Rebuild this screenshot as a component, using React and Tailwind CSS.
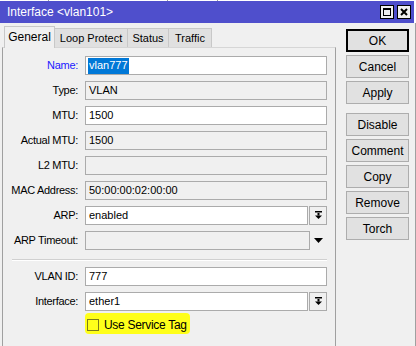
import React from "react";

function DropGlyph() {
  return (
    <svg width="9" height="9" viewBox="0 0 9 9">
      <rect x="1" y="0" width="7" height="1.5" fill="#000" />
      <rect x="3.5" y="2" width="2" height="2.5" fill="#000" />
      <polygon points="1,4.5 8,4.5 4.5,8" fill="#000" />
    </svg>
  );
}

function Field({ label, value, ro, blue, selected, drop, tri }) {
  return (
    <div className="flex items-center h-[19px]">
      <div className={`w-[75px] text-right tracking-[-0.3px] ${blue ? "text-[#1a1aff]" : "text-black"}`}>{label}:</div>
      <div className="ml-[7px] flex items-center w-[242px] h-full">
        <div
          className={`h-full border border-[#ababab] flex items-center pl-[2px] ${ro ? "bg-[#f0f0f0]" : "bg-white"} ${drop ? "w-[224px]" : tri ? "w-[225px]" : "w-full"}`}
        >
          {selected ? (
            <span className="bg-[#0078d7] text-white h-[16px] flex items-center px-px">{value}</span>
          ) : (
            <span className="pl-px">{value}</span>
          )}
        </div>
        {drop && (
          <div className="ml-[1px] w-[18px] h-full border border-[#ababab] bg-[#f0f0f0] flex items-center justify-center">
            <DropGlyph />
          </div>
        )}
        {tri && (
          <div className="flex-1 flex items-center justify-center">
            <svg width="9" height="5" viewBox="0 0 9 5">
              <polygon points="0,0 9,0 4.5,5" fill="#000" />
            </svg>
          </div>
        )}
      </div>
    </div>
  );
}

function Btn({ children, def }) {
  return (
    <div
      className={`h-[23px] flex items-center justify-center bg-[#e1e1e1] ${def ? "border-2 border-black" : "border border-[#adadad]"}`}
    >
      {children}
    </div>
  );
}

export default function App() {
  return (
    <div className="w-[416px] h-[346px] overflow-hidden bg-[#f0f0f0] flex flex-col font-['Liberation_Sans',Arial,sans-serif] text-[11px] text-black relative">
      <div className="h-px bg-white flex">
        <div className="w-[48px]" />
        <div className="w-px bg-[#9a9a9a]" />
        <div className="w-[118px]" />
        <div className="w-px bg-[#9a9a9a]" />
        <div className="w-[49px]" />
        <div className="w-px bg-[#9a9a9a]" />
      </div>
      <div className="flex">
        <div className="w-[414px] h-[22px] bg-[#4f4fcc] flex items-center pl-[7px] pr-[3px] text-white text-[12px]">
          <span className="flex-1">Interface &lt;vlan101&gt;</span>
          <div className="flex gap-[3px]">
            <div className="w-[14px] h-[14px] bg-[#f0f0f0] border border-black flex items-center justify-center">
              <div className="w-[8px] h-[8px] border border-black border-t-2" />
            </div>
            <div className="w-[14px] h-[14px] bg-[#f0f0f0] border border-black flex items-center justify-center">
              <svg width="8" height="8" viewBox="0 0 8 8">
                <path d="M1 1 L7 7 M7 1 L1 7" stroke="#000" strokeWidth="2" />
              </svg>
            </div>
          </div>
        </div>
        <div className="flex-1 bg-white" />
      </div>
      <div className="flex flex-1 border-r border-[#a0a0a0]">
        <div className="w-[336px] pl-[2px] flex flex-col">
          <div className="h-[24px] flex items-end pl-[2px] relative z-10">
            <div className="w-[51px] h-[22px] bg-[#f0f0f0] border border-b-0 border-[#c8c8c8] flex items-center justify-center pb-[2px] -mb-px relative z-10 text-[12px]">
              General
            </div>
            <div className="w-[73px] h-[19px] bg-[#e0e0e0] border border-b-0 border-l-0 border-[#c8c8c8] flex items-center justify-center">
              Loop Protect
            </div>
            <div className="w-[41px] h-[19px] bg-[#e0e0e0] border border-b-0 border-l-0 border-[#c8c8c8] flex items-center justify-center">
              Status
            </div>
            <div className="w-[43px] h-[19px] bg-[#e0e0e0] border border-b-0 border-l-0 border-[#c8c8c8] flex items-center justify-center">
              Traffic
            </div>
          </div>
          <div className="flex-1 border border-b-0 border-t-[#d6d6d6] border-l-[#a0a0a0] border-r-[#a0a0a0] flex flex-col pt-[8px] relative">
            <div className="flex flex-col gap-[6px]">
              <Field label="Name" value="vlan777" blue selected />
              <Field label="Type" value="VLAN" ro />
              <Field label="MTU" value="1500" />
              <Field label="Actual MTU" value="1500" ro />
              <Field label="L2 MTU" value="" ro />
              <Field label="MAC Address" value="50:00:00:02:00:00" ro />
              <Field label="ARP" value="enabled" drop />
              <Field label="ARP Timeout" value="" ro tri />
            </div>
            <div className="ml-[9px] mr-[8px] mt-[9px] border-t border-[#d0d0d0] border-b border-b-white" />
            <div className="flex flex-col gap-[6px] mt-[6px]">
              <Field label="VLAN ID" value="777" />
              <Field label="Interface" value="ether1" drop />
            </div>
            <div className="relative ml-[82px] mt-[6px] h-[16px] flex items-center">
              <div className="absolute left-0 top-[-4px] w-[105px] h-[21px] bg-[#ffff1a] rounded-[4px]" />
              <div className="relative w-[12px] h-[12px] border border-[#7c7c18] ml-[2px]" />
              <span className="relative ml-[5px] text-[12px] tracking-[-0.3px]">Use Service Tag</span>
            </div>
          </div>
        </div>
        <div className="ml-[10px] w-[63px] pt-[6px] flex flex-col gap-[3px] text-[12px]">
          <Btn def>OK</Btn>
          <Btn>Cancel</Btn>
          <Btn>Apply</Btn>
          <div className="h-[6px]" />
          <div className="-mt-[3px] flex flex-col gap-[3px]">
            <Btn>Disable</Btn>
            <Btn>Comment</Btn>
            <Btn>Copy</Btn>
            <Btn>Remove</Btn>
            <Btn>Torch</Btn>
          </div>
        </div>
      </div>
    </div>
  );
}
